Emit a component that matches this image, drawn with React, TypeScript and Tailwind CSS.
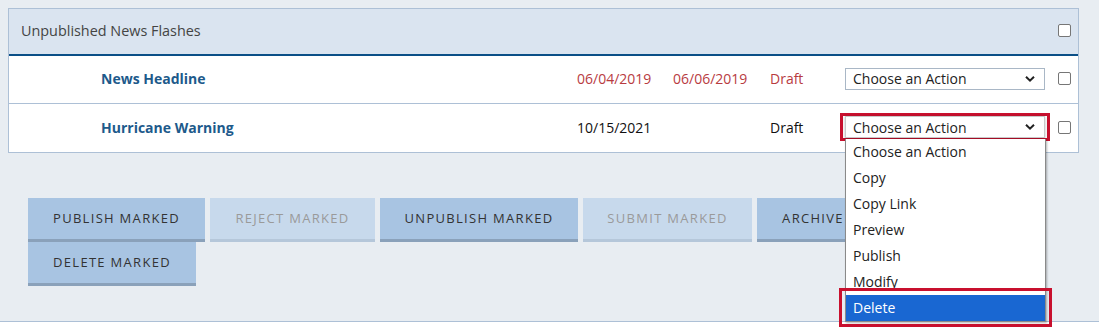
import React from "react";

const font = { fontFamily: '"Open Sans", "Noto Sans", sans-serif' };

function Check() {
  return (
    <span className="block h-[13px] w-[13px] rounded-[2px] border border-[#767676] bg-white" />
  );
}

function Chevron() {
  return (
    <svg width="10" height="7" viewBox="0 0 10 7" className="absolute right-[9px] top-1/2 -translate-y-1/2">
      <path d="M1 1.2 L5 5.2 L9 1.2" fill="none" stroke="#222" strokeWidth="2" />
    </svg>
  );
}

function Select({ open }: { open?: boolean }) {
  return (
    <div className="relative w-[200px]">
      {open && (
        <div className="pointer-events-none absolute -inset-x-[5px] -inset-y-[3px] border-[3px] border-[#c8102e]" />
      )}
      <div
        className={
          "relative flex h-[22px] items-center border bg-white pl-[7px] text-[14px] text-[#222] " +
          (open ? "border-[#c9c9c9] shadow-[0_1px_3px_rgba(0,0,0,0.25)]" : "border-[#a9b7c6]")
        }
      >
        Choose an Action
        <Chevron />
      </div>
      {open && (
        <div className="absolute left-0 top-[23px] z-10 w-[201px] border-r border-b border-l border-[#8a8a8a] bg-white shadow-[1px_1px_2px_rgba(0,0,0,0.3)]">
          {["Choose an Action", "Copy", "Copy Link", "Preview", "Publish", "Modify"].map((o) => (
            <div key={o} className="flex h-[26px] items-center pl-[7px] pb-[2px] text-[14px] text-[#222]">
              {o}
            </div>
          ))}
          <div className="relative flex h-[26px] items-center bg-[#1967d2] pl-[7px] pb-[2px] text-[14px] text-white">
            Delete
            <div className="pointer-events-none absolute -left-[7px] -right-[7px] -top-[7px] -bottom-[6px] border-[3px] border-[#c8102e]" />
          </div>
        </div>
      )}
    </div>
  );
}

function Row({
  name,
  d1,
  d2,
  status,
  red,
  open,
  last,
}: {
  name: string;
  d1: string;
  d2: string;
  status: string;
  red?: boolean;
  open?: boolean;
  last?: boolean;
}) {
  const c = red ? "text-[#b83b3f]" : "text-[#111]";
  return (
    <div className={"flex h-[48px] items-center pb-[2px] pl-[92px] pr-[7px] " + (last ? "" : "border-b border-[#adc0d6]")}>
      <div className="flex-1 text-[14px] font-bold text-[#1d5a8b]">{name}</div>
      <div className={"w-[96px] text-[14px] " + c}>{d1}</div>
      <div className={"w-[97px] text-[14px] " + c}>{d2}</div>
      <div className={"w-[75px] text-[14px] " + c}>{status}</div>
      <Select open={open} />
      <div className="ml-[13px]">
        <Check />
      </div>
    </div>
  );
}

function Btn({ label, w, disabled }: { label: string; w: string; disabled?: boolean }) {
  return (
    <div
      className={
        "flex h-[44px] items-center justify-center border-b-[3px] text-[13px] tracking-[1.3px] " +
        w +
        " " +
        (disabled
          ? "bg-[#c7d9ec] border-[#b5c7da] text-[#9a9a9a]"
          : "bg-[#a8c4e2] border-[#8aa1ba] text-[#333]")
      }
    >
      {label}
    </div>
  );
}

export default function App() {
  return (
    <div style={font} className="h-[334px] w-[1099px] overflow-hidden bg-white">
      <div className="h-[322px] border-b border-[#adc0d6] bg-[#e8edf2] pt-2">
        <div className="ml-2 w-[1071px] border border-[#adc0d6] bg-white">
          <div className="flex h-[47px] items-center justify-between border-b-2 border-[#0b4f87] bg-[#dae4f0] pb-[2px] pl-[12px] pr-[7px]">
            <div className="text-[14.4px] text-[#444]">Unpublished News Flashes</div>
            <Check />
          </div>
          <Row name="News Headline" d1="06/04/2019" d2="06/06/2019" status="Draft" red />
          <Row name="Hurricane Warning" d1="10/15/2021" d2="" status="Draft" open last />
        </div>
        <div className="ml-[28px] mt-[45px] flex w-[1050px] flex-wrap gap-x-[5px]">
          <Btn label="PUBLISH MARKED" w="w-[177px]" />
          <Btn label="REJECT MARKED" w="w-[165px]" disabled />
          <Btn label="UNPUBLISH MARKED" w="w-[198px]" />
          <Btn label="SUBMIT MARKED" w="w-[169px]" disabled />
          <Btn label="ARCHIVE MARKED" w="w-[177px]" />
          <Btn label="DELETE MARKED" w="w-[168px]" />
        </div>
      </div>
    </div>
  );
}
